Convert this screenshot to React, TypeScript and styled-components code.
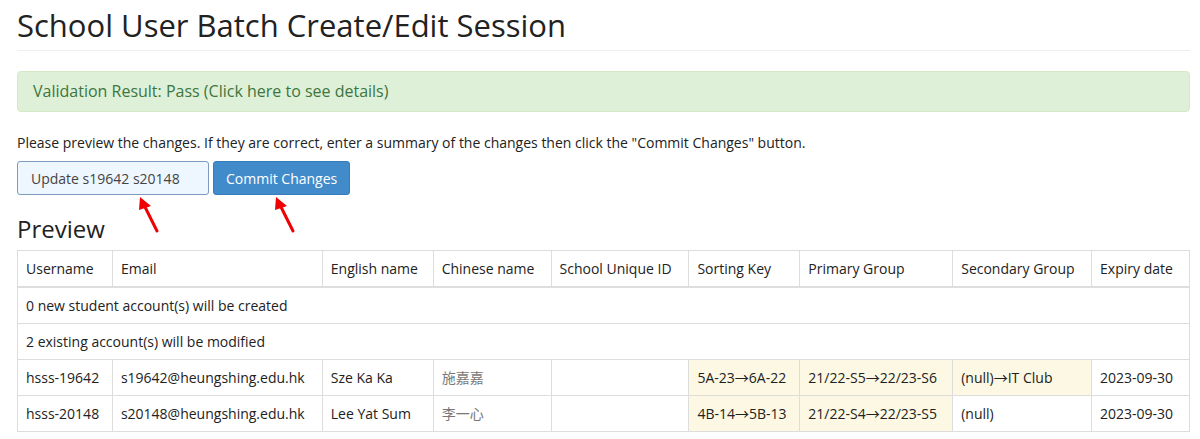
import React from "react";
import styled, { createGlobalStyle } from "styled-components";

const Global = createGlobalStyle`
  body {
    margin: 0;
    background: #fff;
    font-family: "Open Sans", "Noto Sans CJK TC", sans-serif;
    color: #333;
    font-size: 14px;
    line-height: 20px;
  }
  * { box-sizing: border-box; }
`;

const Page = styled.div`
  padding: 0 10px 0 17px;
  width: 1200px;
`;

const PageHeader = styled.div`
  padding-top: 9px;
  padding-bottom: 8px;
  border-bottom: 1px solid #eee;
  width: 1173px;
`;

const Title = styled.h1`
  margin: 0;
  font-size: 31px;
  line-height: 33px;
  font-weight: 400;
  color: #222;
`;

const Alert = styled.div`
  margin-top: 20px;
  width: 1173px;
  background: #dff0d8;
  border: 1px solid #d6e9c6;
  border-radius: 4px;
  color: #3c763d;
  font-size: 16px;
  line-height: 22px;
  padding: 8px 15px 9px;
  cursor: pointer;
`;

const Note = styled.p`
  margin: 21px 0 0;
  font-size: 14px;
  line-height: 20px;
  color: #222;
`;

const FormRow = styled.div`
  position: relative;
  display: flex;
  gap: 4px;
  margin-top: 8px;
`;

const SummaryInput = styled.input`
  width: 192px;
  height: 34px;
  padding: 6px 13px;
  font-family: "Open Sans", sans-serif;
  font-size: 14px;
  color: #444;
  background: #eef7ff;
  border: 1px solid #7d9bbd;
  border-radius: 3px;
  outline: none;
`;

const CommitButton = styled.button`
  height: 34px;
  padding: 6px 12px;
  font-family: "Open Sans", sans-serif;
  font-size: 14px;
  color: #fff;
  background: #428bca;
  border: 1px solid #357ebd;
  border-radius: 3px;
`;

const Arrow = styled.svg<{ $left: number }>`
  position: absolute;
  left: ${(p) => p.$left}px;
  top: 36px;
  overflow: visible;
`;

const SubTitle = styled.h3`
  margin: 20px 0 0;
  font-size: 24px;
  line-height: 28px;
  font-weight: 400;
  color: #222;
`;

const Table = styled.table`
  margin-top: 7px;
  width: 1173px;
  border-collapse: collapse;
  border: 1px solid #ddd;
`;

const Th = styled.th`
  text-align: left;
  font-weight: 400;
  padding: 8px 8px 7px;
  border: 1px solid #ddd;
  border-bottom: 2px solid #ddd;
  line-height: 20px;
  white-space: nowrap;
  color: #222;
`;

const Td = styled.td<{ $changed?: boolean }>`
  padding: 8px;
  border: 1px solid #ddd;
  line-height: 19px;
  white-space: nowrap;
  background: ${(p) => (p.$changed ? "#fcf8e3" : "transparent")};
  color: #222;
`;

const Chinese = styled.span`
  color: #777;
  font-family: "Noto Sans CJK TC", sans-serif;
`;

const columns = [
  { name: "Username", w: 95 },
  { name: "Email", w: 210 },
  { name: "English name", w: 111 },
  { name: "Chinese name", w: 118 },
  { name: "School Unique ID", w: 138 },
  { name: "Sorting Key", w: 111 },
  { name: "Primary Group", w: 153 },
  { name: "Secondary Group", w: 139 },
  { name: "Expiry date", w: 98 },
];

type Row = {
  user: string;
  email: string;
  en: string;
  zh: string;
  sort: string;
  primary: string;
  secondary: string;
  secChanged: boolean;
  expiry: string;
};

const rows: Row[] = [
  {
    user: "hsss-19642",
    email: "s19642@heungshing.edu.hk",
    en: "Sze Ka Ka",
    zh: "施嘉嘉",
    sort: "5A-23→6A-22",
    primary: "21/22-S5→22/23-S6",
    secondary: "(null)→IT Club",
    secChanged: true,
    expiry: "2023-09-30",
  },
  {
    user: "hsss-20148",
    email: "s20148@heungshing.edu.hk",
    en: "Lee Yat Sum",
    zh: "李一心",
    sort: "4B-14→5B-13",
    primary: "21/22-S4→22/23-S5",
    secondary: "(null)",
    secChanged: false,
    expiry: "2023-09-30",
  },
];

const RedArrow = ({ left }: { left: number }) => (
  <Arrow $left={left} width="24" height="40" viewBox="0 0 24 40">
    <line x1="19" y1="34" x2="6" y2="8" stroke="#f00000" strokeWidth="3" strokeLinecap="round" />
    <polygon points="2,0 13,9 1,13" fill="#f00000" />
  </Arrow>
);

export default function App() {
  return (
    <>
      <Global />
      <Page>
        <PageHeader>
          <Title>School User Batch Create/Edit Session</Title>
        </PageHeader>
        <Alert>Validation Result: Pass (Click here to see details)</Alert>
        <Note>
          Please preview the changes. If they are correct, enter a summary of the changes then click the "Commit Changes" button.
        </Note>
        <FormRow>
          <SummaryInput defaultValue="Update s19642 s20148" />
          <CommitButton>Commit Changes</CommitButton>
          <RedArrow left={121} />
          <RedArrow left={257} />
        </FormRow>
        <SubTitle>Preview</SubTitle>
        <Table>
          <colgroup>
            {columns.map((c) => (
              <col key={c.name} style={{ width: c.w }} />
            ))}
          </colgroup>
          <thead>
            <tr>
              {columns.map((c) => (
                <Th key={c.name}>{c.name}</Th>
              ))}
            </tr>
          </thead>
          <tbody>
            <tr>
              <Td colSpan={9}>0 new student account(s) will be created</Td>
            </tr>
            <tr>
              <Td colSpan={9}>2 existing account(s) will be modified</Td>
            </tr>
            {rows.map((r) => (
              <tr key={r.user}>
                <Td>{r.user}</Td>
                <Td>{r.email}</Td>
                <Td>{r.en}</Td>
                <Td>
                  <Chinese>{r.zh}</Chinese>
                </Td>
                <Td></Td>
                <Td $changed>{r.sort}</Td>
                <Td $changed>{r.primary}</Td>
                <Td $changed={r.secChanged}>{r.secondary}</Td>
                <Td>{r.expiry}</Td>
              </tr>
            ))}
          </tbody>
        </Table>
      </Page>
    </>
  );
}
